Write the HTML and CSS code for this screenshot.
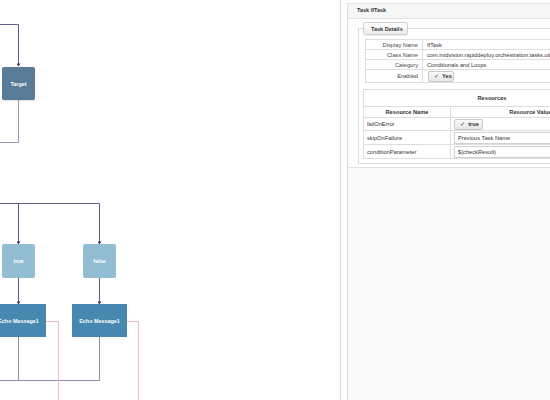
FILE: index.html
```html
<!DOCTYPE html>
<html>
<head>
<meta charset="utf-8">
<link rel="stylesheet" href="styles.css">
</head>
<body>
<div class="app">
  <div class="canvas">
    <svg class="wires" width="340" height="400" viewBox="0 0 340 400">
      <defs>
        <marker id="arrd" markerWidth="4" markerHeight="4" refX="2" refY="3" markerUnits="userSpaceOnUse">
          <path d="M0 0.5 L4 0.5 L2 3.5 Z" fill="#3d3d6b"/>
        </marker>
      </defs>
      <g fill="none" stroke-width="1">
        <path d="M0 24.5 H18.5 V66" stroke="#5c5c86" marker-end="url(#arrd)"/>
        <path d="M18.5 100 V142.5 H0" stroke="#9a9ab4"/>
        <path d="M0 203.5 H99.5 V244" stroke="#5c5c86" marker-end="url(#arrd)"/>
        <path d="M18.5 203.5 V244" stroke="#5c5c86" marker-end="url(#arrd)"/>
        <path d="M18.5 278 V304" stroke="#5c5c86" marker-end="url(#arrd)"/>
        <path d="M99.5 278 V304" stroke="#5c5c86" marker-end="url(#arrd)"/>
        <path d="M18.5 337 V380.5 H0" stroke="#8e8ea8"/>
        <path d="M99.5 337 V380.5 H18" stroke="#8e8ea8"/>
        <path d="M46 321.5 H58.5 V400" stroke="#f3b9c1"/>
        <path d="M127 321.5 H138.5 V400" stroke="#f3b9c1"/>
      </g>
    </svg>
    <div class="node node-target">Target</div>
    <div class="node node-branch node-true">true</div>
    <div class="node node-branch node-false">false</div>
    <div class="node node-echo node-echo1">Echo Message1</div>
    <div class="node node-echo node-echo2">Echo Message1</div>
  </div>
  <aside class="side">
    <div class="panel">
      <div class="panel-head">Task IfTask</div>
      <div class="panel-body">
        <fieldset class="details">
          <legend class="tab">Task Details</legend>
          <table class="props">
            <tr class="r10"><th>Display Name</th><td>IfTask</td></tr>
            <tr class="r10"><th>Class Name</th><td>com.midvision.rapiddeploy.orchestration.tasks.utils.IfTask</td></tr>
            <tr class="r10"><th>Category</th><td>Conditionals and Loops</td></tr>
            <tr class="r13"><th>Enabled</th><td><span class="btn btn-yes"><span class="chk">&#10003;</span>&nbsp; Yes</span></td></tr>
          </table>
          <table class="res">
            <tr class="cap"><th colspan="2">Resources</th></tr>
            <tr class="hdr"><th class="c1">Resource Name</th><th class="c2">Resource Value</th></tr>
            <tr class="rb"><td>failOnError</td><td><span class="btn btn-true"><span class="chk">&#10003;</span>&nbsp; true</span></td></tr>
            <tr class="ri"><td>skipOnFailure</td><td><span class="inp">Previous Task Name</span></td></tr>
            <tr class="ri"><td>conditionParameter</td><td><span class="inp">${checkResult}</span></td></tr>
          </table>
        </fieldset>
      </div>
      <div class="panel-rest"></div>
    </div>
  </aside>
</div>
</body>
</html>
```

FILE: styles.css
```css
html, body {
  margin: 0;
  padding: 0;
  background: #ffffff;
}
body {
  font-family: "Liberation Sans", Arial, sans-serif;
  color: #333;
  width: 550px;
  height: 400px;
  overflow: hidden;
}
.app {
  display: flex;
  width: 550px;
  height: 400px;
}
.canvas {
  position: relative;
  width: 340px;
  height: 400px;
  flex: none;
  overflow: hidden;
  background: #fff;
}
.wires {
  position: absolute;
  left: 0;
  top: 0;
}
.node {
  position: absolute;
  display: flex;
  align-items: center;
  justify-content: center;
  color: #fff;
  font-weight: bold;
  font-size: 5.4px;
  white-space: nowrap;
}
.node-target {
  left: 2px; top: 67px; width: 33px; height: 33px;
  background: #587c98;
  border-radius: 2px;
  box-shadow: 0 1px 1px rgba(0,0,0,0.12);
}
.node-branch {
  top: 244px; width: 33px; height: 34px;
  background: #93bdd3;
  border-radius: 2px;
}
.node-true { left: 2px; }
.node-false { left: 83px; }
.node-echo {
  top: 304px; width: 55px; height: 33px;
  background: #4688b0;
}
.node-echo1 { left: -9px; }
.node-echo2 { left: 72px; }

.side {
  flex: 1;
  min-width: 0;
  border-left: 1px solid #dcdcdc;
  padding-left: 6px;
  padding-top: 3px;
  overflow: hidden;
  background: #fff;
}
.panel {
  width: 330px;
  height: 397px;
  box-sizing: border-box;
  border-left: 1px solid #dcdcdc;
  border-top: 1px solid #e6e6e6;
  display: flex;
  flex-direction: column;
}
.panel-head {
  height: 14px;
  line-height: 13px;
  padding-left: 9px;
  font-weight: bold;
  font-size: 5.5px;
  color: #333;
  background: #f6f6f6;
  border-bottom: 1px solid #e2e2e2;
}
.panel-body {
  padding: 3px 0 3px 10px;
  background: #fff;
  border-bottom: 1px solid #e2e2e2;
}
.panel-rest {
  flex: 1;
  background: #fafafa;
}
.details {
  margin: 0;
  padding: 0 0 4px 6px;
  border: 1px solid #dedede;
  border-right: none;
  min-width: 0;
}
.tab {
  margin-left: -2px;
  box-sizing: border-box;
  width: 45px;
  height: 13px;
  line-height: 12px;
  padding: 0 0 0 7px;
  font-size: 5.5px;
  font-weight: bold;
  color: #333;
  background: linear-gradient(#ffffff, #ececec);
  border: 1px solid #d0d0d0;
  border-radius: 2px;
  box-shadow: 0 1px 0 rgba(0,0,0,0.06);
}
table {
  border-collapse: collapse;
  font-size: 5.7px;
  color: #333;
  white-space: nowrap;
}
.props {
  margin-top: 4px;
  width: 300px;
}
.props th {
  width: 52px;
  text-align: right;
  font-weight: normal;
  color: #444;
  padding: 0 4px 0 0;
  border: 1px solid #dedede;
}
.props td {
  padding: 0 0 0 4px;
  border: 1px solid #dedede;
}
.r10 { height: 10px; }
.r13 { height: 13px; }
.btn {
  display: inline-flex;
  align-items: center;
  box-sizing: border-box;
  height: 11px;
  padding: 0 5px;
  font-weight: bold;
  color: #333;
  background: linear-gradient(#fafafa, #e6e6e6);
  border: 1px solid #c8c8c8;
  border-radius: 2px;
  vertical-align: middle;
}
.chk { font-weight: normal; }
.btn-yes { width: 26px; margin-left: 1px; }
.btn-true { width: 29px; }
.res {
  margin-top: 6px;
  margin-left: -2px;
  width: 310px;
}
.res th, .res td {
  border: 1px solid #dedede;
}
.res .cap th {
  height: 16px;
  font-weight: bold;
  text-align: center;
  padding: 0;
  text-indent: -52px;
}
.res .hdr th {
  height: 10px;
  font-weight: bold;
  text-align: center;
  padding: 0;
}
.res .c1 { width: 86px; }
.res .c2 { text-indent: -62px; }
.res td {
  padding: 0 3px;
}
.rb { height: 13px; }
.ri { height: 14px; }
.inp {
  display: flex;
  align-items: center;
  box-sizing: border-box;
  height: 12px;
  padding-left: 3px;
  border: 1px solid #d0d0d0;
  background: #fff;
}
```
